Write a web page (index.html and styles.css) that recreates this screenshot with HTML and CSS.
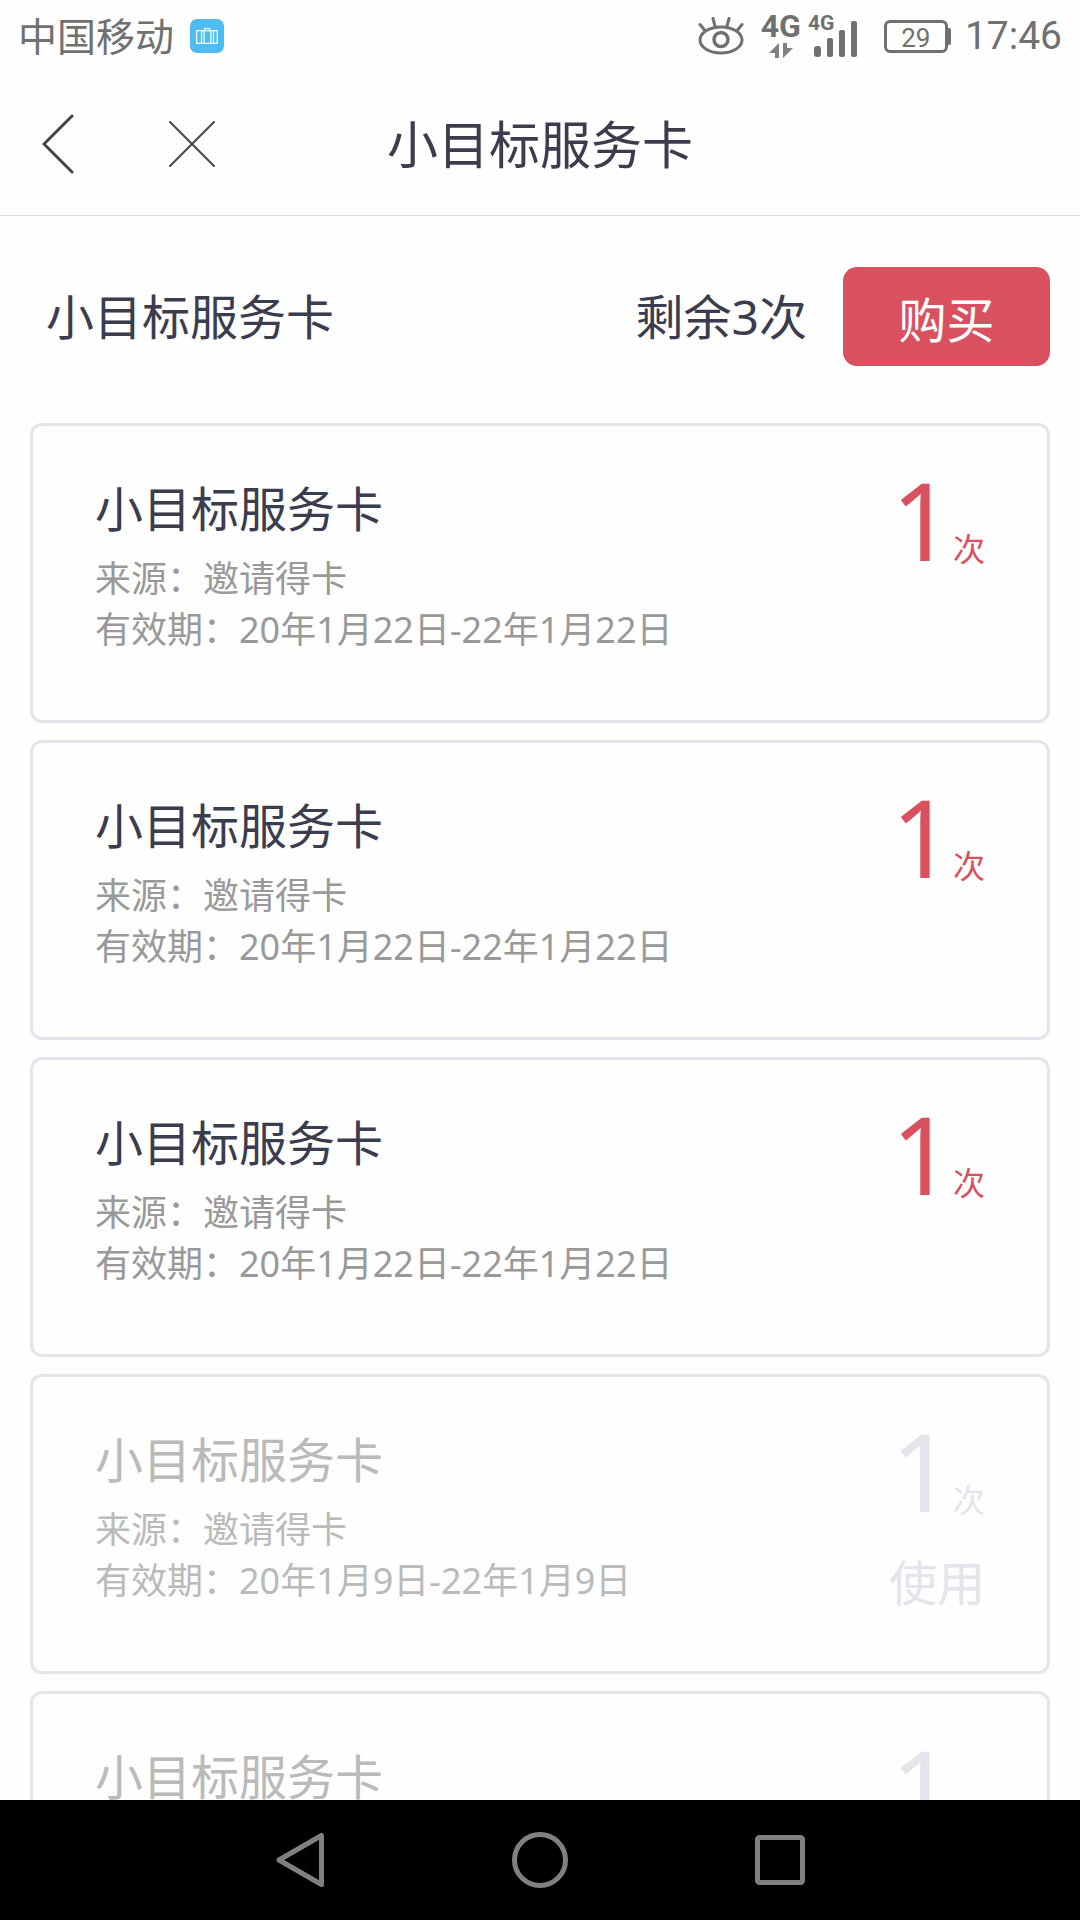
FILE: index.html
```html
<!DOCTYPE html>
<html lang="zh-CN">
<head>
    <meta charset="UTF-8">
    <meta name="viewport" content="width=device-width, initial-scale=1.0">
    <title>小目标服务卡</title>
    <link rel="stylesheet" href="styles.css">
</head>
<body>

<div class="status-bar">
    <span class="carrier">中国移动</span>
    <svg class="app-icon" width="34" height="34" viewBox="0 0 34 34">
        <rect width="34" height="34" rx="7" fill="#4fbcf0"/>
        <g fill="none" stroke="#fff" stroke-width="1.2">
            <rect x="6.7" y="11.7" width="20.6" height="12.6"/>
            <path d="M11.5 12v12M14 12v12M21 12v12M23.500 12v12M14.500 11.500v-2h5v2"/>
        </g>
    </svg>
    <div class="status-icons">
        <svg width="46" height="38" viewBox="0 0 46 38" fill="none" stroke="#707070" stroke-width="3" stroke-linecap="round">
            <ellipse cx="23" cy="23" rx="21" ry="13"/>
            <circle cx="23" cy="22.5" r="7" stroke-width="3.5"/>
            <path d="M6.5 13L2 7.5M17 9L15 1.5M29 9L31 1.5M39.5 13L44 7.5"/>
        </svg>
        <div class="network">
            <span class="network-type">4G</span>
            <svg width="24" height="16" viewBox="0 0 24 16" fill="#808080">
                <path d="M10 0v15H6v-5H0zM14 15V0h4v5h6z"/>
            </svg>
        </div>
        <div class="signal">
            <span class="signal-type">4G</span>
            <svg width="48" height="42" viewBox="0 0 48 42" fill="#707070">
                <rect x="4" y="31" width="7" height="11" rx="3"/>
                <rect x="17" y="23" width="6" height="19" rx="2"/>
                <rect x="29" y="15" width="6" height="27" rx="2"/>
                <rect x="41" y="6" width="6" height="36" rx="2"/>
            </svg>
        </div>
        <div class="battery"><span class="battery-level">29</span></div>
        <span class="clock">17:46</span>
    </div>
</div>

<header class="nav">
    <button class="nav-btn" aria-label="返回">
        <svg width="32" height="60" viewBox="0 0 32 60" fill="none" stroke="#43444f" stroke-width="3" stroke-linecap="round" stroke-linejoin="round">
            <path d="M30 2L2 30l28 28"/>
        </svg>
    </button>
    <button class="nav-btn" aria-label="关闭">
        <svg width="46" height="46" viewBox="0 0 46 46" fill="none" stroke="#43444f" stroke-width="2" stroke-linecap="round">
            <path d="M1 1l44 44M45 1L1 45"/>
        </svg>
    </button>
    <h1 class="nav-title">小目标服务卡</h1>
</header>

<main class="content">
    <div class="summary">
        <h2 class="summary-title">小目标服务卡</h2>
        <span class="summary-count">剩余3次</span>
        <button class="buy-btn">购买</button>
    </div>

    <ul class="card-list">
        <li class="card">
            <div class="card-info">
                <h3 class="card-title">小目标服务卡</h3>
                <p class="card-meta">来源：邀请得卡</p>
                <p class="card-meta">有效期：20年1月22日-22年1月22日</p>
            </div>
            <div class="card-side">
                <p class="times"><span class="times-num">1</span><span class="times-unit">次</span></p>
            </div>
        </li>
        <li class="card">
            <div class="card-info">
                <h3 class="card-title">小目标服务卡</h3>
                <p class="card-meta">来源：邀请得卡</p>
                <p class="card-meta">有效期：20年1月22日-22年1月22日</p>
            </div>
            <div class="card-side">
                <p class="times"><span class="times-num">1</span><span class="times-unit">次</span></p>
            </div>
        </li>
        <li class="card">
            <div class="card-info">
                <h3 class="card-title">小目标服务卡</h3>
                <p class="card-meta">来源：邀请得卡</p>
                <p class="card-meta">有效期：20年1月22日-22年1月22日</p>
            </div>
            <div class="card-side">
                <p class="times"><span class="times-num">1</span><span class="times-unit">次</span></p>
            </div>
        </li>
        <li class="card used">
            <div class="card-info">
                <h3 class="card-title">小目标服务卡</h3>
                <p class="card-meta">来源：邀请得卡</p>
                <p class="card-meta">有效期：20年1月9日-22年1月9日</p>
            </div>
            <div class="card-side">
                <p class="times"><span class="times-num">1</span><span class="times-unit">次</span></p>
                <button class="use-btn" disabled>使用</button>
            </div>
        </li>
        <li class="card used">
            <div class="card-info">
                <h3 class="card-title">小目标服务卡</h3>
            </div>
            <div class="card-side">
                <p class="times"><span class="times-num">1</span></p>
            </div>
        </li>
    </ul>
</main>

<nav class="system-nav">
    <button class="system-btn" aria-label="后退">
        <svg width="60" height="60" viewBox="0 0 60 60" fill="none" stroke="#808080" stroke-width="5" stroke-linejoin="round">
            <path d="M9 30L51.5 5.5v49z"/>
        </svg>
    </button>
    <button class="system-btn" aria-label="主屏幕">
        <svg width="60" height="60" viewBox="0 0 60 60" fill="none" stroke="#808080" stroke-width="5">
            <circle cx="30" cy="30" r="25.5"/>
        </svg>
    </button>
    <button class="system-btn" aria-label="最近任务">
        <svg width="60" height="60" viewBox="0 0 60 60" fill="none" stroke="#808080" stroke-width="5">
            <rect x="7.5" y="7.5" width="45" height="45" rx="2"/>
        </svg>
    </button>
</nav>

</body>
</html>
```

FILE: styles.css
```css
* {
    box-sizing: border-box;
}
body {
    margin: 0;
    height: 100vh;
    display: flex;
    flex-direction: column;
    overflow: hidden;
    font-family: "Noto Sans", "Noto Sans CJK SC", sans-serif;
    color: #3b3c4d;
    background-color: #fefefe;
}
h1, h2, h3, p, ul {
    margin: 0;
    padding: 0;
    font-weight: 400;
}
button {
    padding: 0;
    border: none;
    background: none;
    font-family: inherit;
    cursor: pointer;
}
svg {
    display: block;
}

/* status bar */
.status-bar {
    flex: none;
    display: flex;
    align-items: center;
    height: 72px;
    padding: 0 18px;
    color: #707070;
}
.carrier {
    font-size: 39px;
    line-height: 72px;
}
.app-icon {
    margin-left: 16px;
}
.status-icons {
    display: flex;
    align-items: center;
    margin-left: auto;
    font-family: Roboto, sans-serif;
}
.network {
    display: flex;
    flex-direction: column;
    align-items: center;
    gap: 4px;
    margin-left: 17px;
}
.network-type {
    font-family: "Liberation Sans Narrow", Roboto, sans-serif;
    font-size: 32px;
    font-weight: 700;
    line-height: 26px;
}
.signal {
    position: relative;
    margin-left: 9px;
}
.signal-type {
    position: absolute;
    top: -4px;
    left: -2px;
    font-size: 21px;
    font-weight: 700;
    line-height: 24px;
}
.battery {
    position: relative;
    width: 64px;
    height: 33px;
    margin-left: 26px;
    border: 3px solid #707070;
    border-radius: 6px;
    text-align: center;
}
.battery::after {
    content: "";
    position: absolute;
    top: 5px;
    right: -6px;
    width: 4px;
    height: 17px;
    border-radius: 0 2px 2px 0;
    background-color: #707070;
}
.battery-level {
    display: block;
    font-size: 26px;
    line-height: 30px;
}
.clock {
    margin-left: 17px;
    font-size: 39px;
    line-height: 76px;
}

/* page header */
.nav {
    flex: none;
    position: relative;
    display: flex;
    align-items: center;
    gap: 95px;
    height: 144px;
    padding: 0 42px;
    border-bottom: 1px solid #dcdcdc;
}
.nav-title {
    position: absolute;
    left: 0;
    right: 0;
    text-align: center;
    font-size: 51px;
    line-height: 76px;
    pointer-events: none;
}

.content {
    flex: 1;
    min-height: 0;
    overflow: hidden;
    padding: 0 30px;
}
.summary {
    display: flex;
    align-items: center;
    padding: 51px 0 57px 16px;
    font-size: 48px;
}
.summary-title {
    flex: 1;
    font-size: 48px;
    line-height: 72px;
}
.summary-count {
    margin-right: 36px;
    line-height: 72px;
}
.buy-btn {
    width: 207px;
    height: 99px;
    border-radius: 14px;
    background-color: #d9515f;
    color: #fff;
    font-size: 48px;
}

/* cards */
.card-list {
    display: flex;
    flex-direction: column;
    gap: 17px;
    list-style: none;
}
.card {
    flex: none;
    display: flex;
    justify-content: space-between;
    min-height: 300px;
    padding: 40px 62px;
    border: 3px solid #e4e4ec;
    border-radius: 12px;
}
.card-info {
    padding-top: 7px;
}
.card-title {
    margin-bottom: 8px;
    font-size: 48px;
    line-height: 72px;
}
.card-meta {
    color: #999;
    font-size: 36px;
    line-height: 51px;
}
.card-side {
    display: flex;
    flex-direction: column;
    align-items: flex-end;
    gap: 22px;
    color: #d9515f;
}
.times {
    display: flex;
    align-items: baseline;
}
.times-num {
    font-size: 108px;
    line-height: 108px;
}
.times-unit {
    font-size: 32px;
    line-height: 48px;
}
.use-btn {
    color: #e4e4ec;
    font-size: 48px;
    line-height: 72px;
}
.used .card-title,
.used .card-meta {
    color: #bababa;
}
.used .card-side {
    color: #e4e4ec;
}
.used .times {
    min-width: 94px;
}

/* system buttons */
.system-nav {
    flex: none;
    display: flex;
    justify-content: center;
    gap: 180px;
    height: 120px;
    background-color: #000;
}
```
